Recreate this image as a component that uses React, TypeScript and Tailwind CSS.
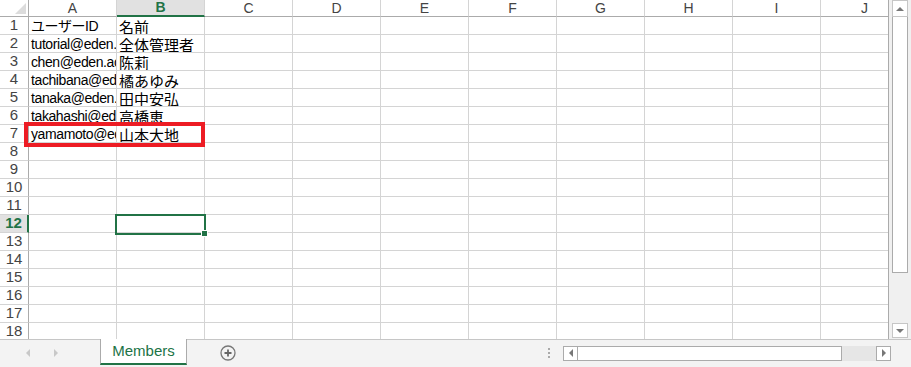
import React from 'react';

const COLS = ['A', 'B', 'C', 'D', 'E', 'F', 'G', 'H', 'I', 'J'];

const DATA: Record<number, [string, string]> = {
  1: ['ユーザーID', '名前'],
  2: ['tutorial@eden.ac.jp', '全体管理者'],
  3: ['chen@eden.ac.jp', '陈莉'],
  4: ['tachibana@eden.ac.jp', '橘あゆみ'],
  5: ['tanaka@eden.ac.jp', '田中安弘'],
  6: ['takahashi@eden.ac.jp', '高橋恵'],
  7: ['yamamoto@eden.ac.jp', '山本大地'],
};

const latinFont = { fontFamily: '"Liberation Sans", "Noto Sans CJK JP", sans-serif' };
const cjkFont = { fontFamily: '"Noto Sans CJK JP", "Liberation Sans", sans-serif' };
const headFont = { fontFamily: '"Liberation Sans", Arial, sans-serif' };

function Sheet() {
  const rows = Array.from({ length: 18 }, (_, i) => i + 1);
  return (
    <div className="relative h-[339px] w-[889px] overflow-hidden border-r border-[#ababab] bg-white">
      <div className="grid grid-cols-[29px_repeat(10,88px)] auto-rows-[18px] [grid-template-rows:17px]">
        {/* corner */}
        <div className="relative h-[17px] border-r border-b border-[#ababab] bg-white">
          <svg width="11" height="11" viewBox="0 0 11 11" className="absolute bottom-[2px] right-[2px]">
            <path d="M11 0V11H0Z" fill="#dcdcdc" />
          </svg>
        </div>
        {COLS.map(c => (
          <div
            key={c}
            style={headFont}
            className={
              c === 'B'
                ? 'flex h-[17px] items-center justify-center border-r border-[#d4d4d4] border-b-2 border-b-[#217346] bg-[#e1e1e1] text-[14px] font-bold text-[#217346]'
                : 'flex h-[17px] items-center justify-center border-r border-b border-r-[#d4d4d4] border-b-[#ababab] text-[14px] text-[#444]'
            }
          >
            {c}
          </div>
        ))}
        {rows.map(r => (
          <React.Fragment key={r}>
            <div
              style={headFont}
              className={
                r === 12
                  ? 'flex h-[18px] items-center justify-center border-b border-b-[#d4d4d4] border-r-2 border-r-[#217346] bg-[#e1e1e1] text-[15px] font-bold text-[#217346]'
                  : 'flex h-[18px] items-center justify-center border-r border-b border-r-[#ababab] border-b-[#d4d4d4] text-[15px] text-[#444]'
              }
            >
              {r}
            </div>
            {COLS.map((c, ci) => {
              const v = ci < 2 && DATA[r] ? DATA[r][ci] : '';
              const isA = ci === 0;
              return (
                <div
                  key={c}
                  style={isA ? latinFont : cjkFont}
                  className={
                    (isA ? 'text-[14px] tracking-[-0.4px] ' : 'text-[15px] ') +
                    'flex h-[18px] items-center overflow-hidden whitespace-nowrap border-r border-b border-[#d4d4d4] pl-[2px] pt-[1px] leading-none text-black'
                  }
                >
                  {v}
                </div>
              );
            })}
          </React.Fragment>
        ))}
      </div>

      {/* active cell B12 */}
      <div className="absolute left-[115px] top-[214px] h-[21px] w-[91px] border-2 border-[#217346]" />
      <div className="absolute left-[201px] top-[230px] h-[7px] w-[7px] border border-white bg-[#217346]" />

      {/* annotation */}
      <div className="absolute left-[24px] top-[122px] h-[25px] w-[181px] border-4 border-[#ed1c24]" />
    </div>
  );
}

function VScroll() {
  return (
    <div className="flex h-[339px] w-[22px] flex-col bg-[#f0f0f0] pl-[3px] pr-[3px]">
      <div className="flex h-[17px] w-[16px] items-center justify-center border border-[#c6c6c6] bg-white">
        <div className="h-0 w-0 border-x-[4px] border-b-[4px] border-x-transparent border-b-[#777]" />
      </div>
      <div className="h-[256px] w-[16px] border border-t-0 border-[#ababab] bg-white" />
      <div className="flex-1" />
      <div className="mb-[1px] flex h-[15px] w-[16px] items-center justify-center border border-[#c6c6c6] bg-white">
        <div className="h-0 w-0 border-x-[4px] border-t-[4px] border-x-transparent border-t-[#777]" />
      </div>
    </div>
  );
}

function TabBar() {
  return (
    <div className="flex h-[28px] items-start bg-[#f3f3f3]">
      <div className="flex h-[27px] w-[100px] items-center gap-[24px] border-t border-[#c6c6c6] pl-[26px]">
        <div className="h-0 w-0 border-y-[4px] border-r-[4px] border-y-transparent border-r-[#c8c8c8]" />
        <div className="h-0 w-0 border-y-[4px] border-l-[4px] border-y-transparent border-l-[#c8c8c8]" />
      </div>
      <div
        style={{ fontFamily: '"Liberation Sans", Arial, sans-serif' }}
        className="flex h-[26px] w-[87px] items-center justify-center border-x border-b-2 border-x-[#ababab] border-b-[#217346] bg-white text-[15px] text-[#217346]"
      >
        Members
      </div>
      <div className="flex h-[27px] flex-1 items-center border-t border-[#c6c6c6]">
        <svg width="16" height="16" viewBox="0 0 16 16" className="ml-[33px]">
          <circle cx="8" cy="8" r="7" fill="none" stroke="#777" strokeWidth="1.3" />
          <path d="M8 4.5v7M4.5 8h7" stroke="#666" strokeWidth="1.8" />
        </svg>
        <div className="ml-[312px] flex flex-col gap-[2px]">
          <div className="h-[2px] w-[2px] bg-[#aaa]" />
          <div className="h-[2px] w-[2px] bg-[#aaa]" />
          <div className="h-[2px] w-[2px] bg-[#aaa]" />
        </div>
        <div className="ml-[13px] flex h-[15px] w-[328px] items-stretch">
          <div className="flex w-[15px] items-center justify-center border border-[#ababab] bg-white">
            <div className="h-0 w-0 border-y-[4px] border-r-[4px] border-y-transparent border-r-[#777]" />
          </div>
          <div className="w-[264px] border-y border-r border-[#ababab] bg-white" />
          <div className="flex-1 bg-[#e6e6e6]" />
          <div className="flex w-[15px] items-center justify-center border border-[#ababab] bg-white">
            <div className="h-0 w-0 border-y-[4px] border-l-[4px] border-y-transparent border-l-[#777]" />
          </div>
        </div>
      </div>
    </div>
  );
}

export default function App() {
  return (
    <div className="flex h-[367px] w-[911px] flex-col overflow-hidden bg-white">
      <div className="flex">
        <Sheet />
        <VScroll />
      </div>
      <TabBar />
    </div>
  );
}
